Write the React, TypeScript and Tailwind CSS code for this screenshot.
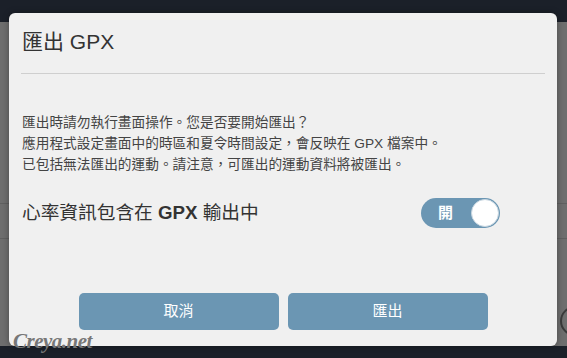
const font = "font-['Liberation_Sans','Noto_Sans_CJK_TC',sans-serif]";

const App = () => {
  return (
    <div className={`relative w-[567px] h-[358px] overflow-hidden bg-[#6e6e6e] flex flex-col ${font}`}>
      <div className="h-[22px] bg-[#1b2029]" />
      <div className="flex-1 flex flex-col">
        <div className="mt-[181px] h-px bg-[#606060]" />
        <div className="mt-[34px] h-px bg-[#606060]" />
      </div>
      <div className="h-[12px] bg-[#1b2029]" />

      {/* faint circle peeking from page underneath */}
      <div className="absolute left-[560px] top-[306px] w-[30px] h-[30px] rounded-full border-2 border-[#3a3a3a]" />

      {/* modal */}
      <div className="absolute left-[9px] top-[13px] w-[548px] h-[333px] rounded-[6px] bg-[#f0f0f0] shadow-[0_0_6px_rgba(0,0,0,0.35)] px-[12px] flex flex-col">
        <h2 className="mt-[15px] text-[21px] leading-[28px] text-[#333] pl-px">匯出 GPX</h2>
        <div className="mt-[17px] h-px bg-[#cfcfcf]" />

        <div className="mt-[38px] text-[13.7px] leading-[21px] text-[#444] pl-px">
          <p>匯出時請勿執行畫面操作。您是否要開始匯出？</p>
          <p>應用程式設定畫面中的時區和夏令時間設定，會反映在 GPX 檔案中。</p>
          <p>已包括無法匯出的運動。請注意，可匯出的運動資料將被匯出。</p>
        </div>

        <div className="mt-[23px] flex items-center justify-between pr-[45px]">
          <span className="text-[18.7px] leading-[30px] text-[#333] pl-px">
            心率資訊包含在 <b className="font-bold">GPX</b> 輸出中
          </span>
          <div className="w-[79px] h-[30px] rounded-full bg-[#6b96b3] flex items-center justify-between pl-[17px] pr-px">
            <span className="text-[15px] font-bold text-white">開</span>
            <span className="w-[28px] h-[28px] rounded-full bg-white border border-[#c8d6e0]" />
          </div>
        </div>

        <div className="mt-[65px] flex justify-center gap-[9px]">
          <button className="w-[200px] h-[37px] rounded-[5px] bg-[#6b96b3] text-white text-[15px]">取消</button>
          <button className="w-[200px] h-[37px] rounded-[5px] bg-[#6b96b3] text-white text-[15px]">匯出</button>
        </div>
      </div>

      <span className="absolute left-[13px] top-[326px] text-[21px] italic font-bold text-[#777] font-['Liberation_Serif',serif] tracking-[-0.5px]">
        Creya.net
      </span>
    </div>
  );
};

export default App;
